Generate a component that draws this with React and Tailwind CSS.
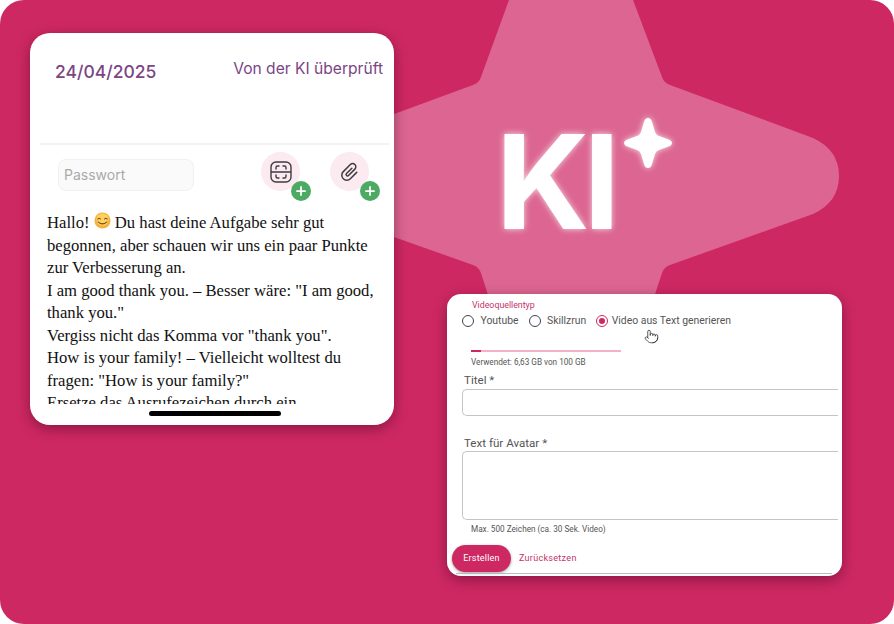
import React from "react";
import { Pointer, Plus } from "lucide-react";

const feedback = [
  'begonnen, aber schauen wir uns ein paar Punkte',
  'zur Verbesserung an.',
  'I am good thank you. – Besser wäre: "I am good,',
  'thank you."',
  'Vergiss nicht das Komma vor "thank you".',
  'How is your family! – Vielleicht wolltest du',
  'fragen: "How is your family?"',
  'Ersetze das Ausrufezeichen durch ein',
];

const Smiley = () => (
  <svg viewBox="0 0 18 18" className="inline-block w-[17px] h-[17px] align-[-1px]">
    <circle cx="9" cy="9" r="8.5" fill="#f6b13c" />
    <circle cx="9" cy="8" r="6.5" fill="#fbd25e" />
    <path d="M4 7.4q1.4-1.6 2.8 0M11.2 7.4q1.4-1.6 2.8 0" fill="none" stroke="#7a4a12" strokeWidth="1.1" strokeLinecap="round" />
    <path d="M4.6 10.6q4.4 4 8.8 0" fill="none" stroke="#7a4a12" strokeWidth="1.1" strokeLinecap="round" />
    <circle cx="3.8" cy="10" r="1.2" fill="#f59a6a" opacity="0.6" />
    <circle cx="14.2" cy="10" r="1.2" fill="#f59a6a" opacity="0.6" />
  </svg>
);

const ScanIcon = () => (
  <svg viewBox="0 0 22 22" fill="none" stroke="#3f3b40" strokeWidth="1.4" strokeLinecap="round" strokeLinejoin="round" className="w-[22px] h-[22px]">
    <rect x="1" y="1" width="20" height="20" rx="5" />
    <path d="M6 8V6.5A1.5 1.5 0 0 1 7.5 5H9M13 5h1.5A1.5 1.5 0 0 1 16 6.5V8M6 14v1.5A1.5 1.5 0 0 0 7.5 17H9M13 17h1.5a1.5 1.5 0 0 0 1.5-1.5V14M1.5 11h19" />
  </svg>
);

const ClipIcon = () => (
  <svg viewBox="0 0 24 24" fill="none" stroke="#3f3b40" strokeWidth="1.5" strokeLinecap="round" strokeLinejoin="round" className="w-6 h-6 rotate-45">
    <path d="M17 7.5V16.5a5 5 0 0 1-10 0V6.5a3.2 3.2 0 0 1 6.4 0V15.5a1.4 1.4 0 0 1-2.8 0V8" />
  </svg>
);

const AddButton = ({ children }) => (
  <div className="relative w-[39px] h-[39px] rounded-full bg-[#fbeaf0] flex items-center justify-center">
    {children}
    <span className="absolute left-[30px] top-[29px] w-5 h-5 rounded-full bg-[#4caa62] flex items-center justify-center">
      <Plus size={14} color="#fff" strokeWidth={3} />
    </span>
  </div>
);

const Radio = ({ label, checked }) => (
  <label className={`flex items-center ${checked ? "gap-[3.5px]" : "gap-[6.5px]"}`}>
    <span className={`w-3 h-3 rounded-full border-[1.5px] flex items-center justify-center ${checked ? "border-[#ce2862]" : "border-[#3c4450]"}`}>
      {checked && <span className="w-[6px] h-[6px] rounded-full bg-[#ce2862]" />}
    </span>
    <span className="text-[10.4px] leading-3 text-[#555]">{label}</span>
  </label>
);

const App = () => {
  return (
    <div className="w-[894px] h-[624px] bg-white overflow-hidden">
      <div className="relative w-[894px] h-[624px] rounded-[24px] bg-[#ce2862] overflow-hidden flex items-start pl-[30px] pt-[33px] gap-[53px] font-['Inter',sans-serif]">
        {/* star behind the cards */}
        <svg className="absolute left-0 top-0" width="894" height="624" viewBox="0 0 894 624">
          <path
            d="M509 0H633L662 77Q664 83 670 85L813 138Q839 150 839 176Q839 202 813 214L670 265Q664 267 662 273L630 370H512L481 273Q479 267 473 265L329 214Q303 202 303 176Q303 150 329 138L473 85Q479 83 481 77Z"
            fill="#dc6691"
          />
        </svg>

        <div className="relative w-[364px] h-[392px] shrink-0 bg-white rounded-[20px] shadow-[0_4px_14px_rgba(60,0,30,0.45)] overflow-hidden flex flex-col">
          <div className="flex justify-between items-start h-[110px] pl-[25px] pr-[11px] pt-[28px] text-[#7b4585]">
            <span className="text-[17.5px] leading-[22px] font-medium">24/04/2025</span>
            <span className="text-[15.6px] leading-[20px] -mt-[2px]">Von der KI überprüft</span>
          </div>
          <div className="mx-[10px] w-[349px] h-[2px] bg-[#f3f3f3]" />
          <div className="flex items-start pl-[28px] pt-[13px] h-[67px]">
            <div className="w-[136px] h-[32px] mt-[1px] rounded-lg border border-[#f1f1f1] bg-[#fafafa] pl-[5px] text-[14px] leading-[30px] text-[#aaa]">Passwort</div>
            <div className="ml-[67px] flex gap-[30px] -mt-[6px]">
              <AddButton><ScanIcon /></AddButton>
              <AddButton><ClipIcon /></AddButton>
            </div>
          </div>
          <div className="h-[192px] overflow-hidden pl-[17px] font-['Liberation_Serif',serif] text-[16.65px] leading-[22.5px] text-[#111] whitespace-nowrap">
            <p>Hallo! <Smiley /> Du hast deine Aufgabe sehr gut</p>
            {feedback.map((line) => <p key={line}>{line}</p>)}
          </div>
          <div className="ml-[119px] mt-[7px] w-[132px] h-[5px] rounded-full bg-black" />
        </div>

        <div className="relative mt-[261px] w-[395px] h-[282px] shrink-0 bg-white rounded-[14px] shadow-[0_4px_14px_rgba(60,0,30,0.45)] overflow-hidden font-['Roboto',sans-serif] flex flex-col">
          <span className="ml-[25px] mt-[6px] text-[8.8px] leading-[10px] text-[#c2336b]">Videoquellentyp</span>
          <div className="flex items-center ml-[15px] mt-[5px] gap-[10px]">
            <Radio label="Youtube" />
            <Radio label="Skillzrun" />
            <Radio label="Video aus Text generieren" checked />
          </div>
          <Pointer size={15} color="#333" strokeWidth={1.3} className="absolute left-[197px] top-[35px]" />
          <div className="ml-[24px] mt-[23px] w-[150px] h-[2px] bg-[#f2b0ca]">
            <div className="w-[10px] h-[2px] bg-[#ce2862]" />
          </div>
          <span className="ml-[24px] mt-[5px] text-[8.2px] leading-[10px] text-[#555]">Verwendet: 6,63 GB von 100 GB</span>
          <span className="ml-[17px] mt-[6px] text-[11.6px] leading-[14px] text-[#555]">Titel *</span>
          <div className="ml-[15px] mt-[2px] w-[376px] h-[27px] rounded-l-[5px] border-[1.5px] border-r-0 border-[#c4c4c4]" />
          <span className="ml-[17px] mt-[20px] text-[11.6px] leading-[14px] text-[#555]">Text für Avatar *</span>
          <div className="ml-[15px] mt-[1px] w-[376px] h-[69px] rounded-l-[5px] border-[1.5px] border-r-0 border-[#c4c4c4]" />
          <span className="ml-[24px] mt-[4px] text-[8.2px] leading-[10px] text-[#555]">Max. 500 Zeichen (ca. 30 Sek. Video)</span>
          <div className="flex items-center ml-[5px] mt-[11px] gap-[8px]">
            <button className="w-[59px] h-[27px] rounded-full bg-[#ce2862] text-white text-[9px] tracking-[0.2px] shadow-[0_1px_3px_rgba(0,0,0,0.4)]">Erstellen</button>
            <span className="text-[9px] tracking-[0.3px] text-[#c2336b]">Zurücksetzen</span>
          </div>
          <div className="ml-[9px] mt-[1px] w-[376px] h-px bg-[#bbb]" />
        </div>

        {/* KI mark */}
        <div className="absolute left-[496px] top-[103px] flex items-start">
          <span className="text-[130px] leading-[158px] font-bold tracking-[-6px] text-white [text-shadow:0_0_6px_rgba(255,255,255,0.8)]">KI</span>
        </div>
        <svg className="absolute left-[622px] top-[117px] drop-shadow-[0_0_3px_rgba(255,255,255,0.8)]" width="52" height="52" viewBox="0 0 52 52">
          <path d="M26 1Q29 1 30 5L33 15Q34 18 37 19L48 23Q52 26 48 29L37 33Q34 34 33 37L30 47Q29 51 26 51Q23 51 22 47L19 37Q18 34 15 33L4 29Q0 26 4 23L15 19Q18 18 19 15L22 5Q23 1 26 1Z" fill="#fff" />
        </svg>
      </div>
    </div>
  );
};

export default App;
